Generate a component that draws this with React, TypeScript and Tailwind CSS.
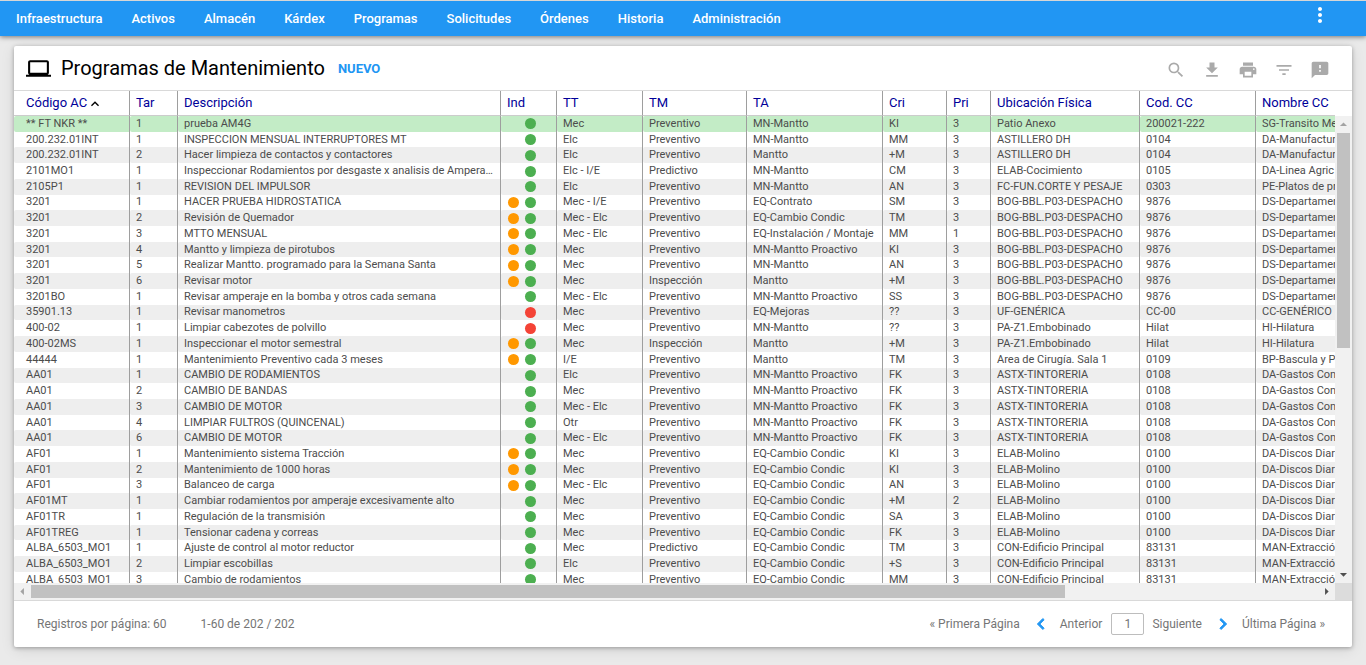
import React from 'react';
import {
    MdArrowDropDown,
    MdChevronLeft,
    MdChevronRight,
    MdFeedback,
    MdFileDownload,
    MdFilterList,
    MdKeyboardArrowUp,
    MdLaptop,
    MdMoreVert,
    MdPrint,
    MdSearch,
} from 'react-icons/md';

const menuItems = [
    'Infraestructura',
    'Activos',
    'Almacén',
    'Kárdex',
    'Programas',
    'Solicitudes',
    'Órdenes',
    'Historia',
    'Administración',
];

const columns = [
    { label: 'Código AC', width: 'w-[116px]' },
    { label: 'Tar', width: 'w-[48px]' },
    { label: 'Descripción', width: 'w-[323px]' },
    { label: 'Ind', width: 'w-[56px]' },
    { label: 'TT', width: 'w-[86px]' },
    { label: 'TM', width: 'w-[104px]' },
    { label: 'TA', width: 'w-[136px]' },
    { label: 'Cri', width: 'w-[64px]' },
    { label: 'Pri', width: 'w-[44px]' },
    { label: 'Ubicación Física', width: 'w-[149px]' },
    { label: 'Cod. CC', width: 'w-[116px]' },
    { label: 'Nombre CC', width: '' },
];

// codigo, tar, descripcion, ind (o = orange, g = green, r = red), tt, tm, ta, cri, pri, ubicacion, cod cc, nombre cc
const rows = [
    ['** FT NKR **', '1', 'prueba AM4G', 'g', 'Mec', 'Preventivo', 'MN-Mantto', 'KI', '3', 'Patio Anexo', '200021-222', 'SG-Transito Me'],
    ['200.232.01INT', '1', 'INSPECCION MENSUAL INTERRUPTORES MT', 'g', 'Elc', 'Preventivo', 'MN-Mantto', 'MM', '3', 'ASTILLERO DH', '0104', 'DA-Manufactur'],
    ['200.232.01INT', '2', 'Hacer limpieza de contactos y contactores', 'g', 'Elc', 'Preventivo', 'Mantto', '+M', '3', 'ASTILLERO DH', '0104', 'DA-Manufactur'],
    ['2101MO1', '1', 'Inspeccionar Rodamientos por desgaste x analisis de Amperaje y ruido', 'g', 'Elc - I/E', 'Predictivo', 'MN-Mantto', 'CM', '3', 'ELAB-Cocimiento', '0105', 'DA-Linea Agric'],
    ['2105P1', '1', 'REVISION DEL IMPULSOR', 'g', 'Elc', 'Preventivo', 'MN-Mantto', 'AN', '3', 'FC-FUN.CORTE Y PESAJE', '0303', 'PE-Platos de pr'],
    ['3201', '1', 'HACER PRUEBA HIDROSTATICA', 'og', 'Mec - I/E', 'Preventivo', 'EQ-Contrato', 'SM', '3', 'BOG-BBL.P03-DESPACHO', '9876', 'DS-Departamen'],
    ['3201', '2', 'Revisión de Quemador', 'og', 'Mec - Elc', 'Preventivo', 'EQ-Cambio Condic', 'TM', '3', 'BOG-BBL.P03-DESPACHO', '9876', 'DS-Departamen'],
    ['3201', '3', 'MTTO MENSUAL', 'og', 'Mec - Elc', 'Preventivo', 'EQ-Instalación / Montaje', 'MM', '1', 'BOG-BBL.P03-DESPACHO', '9876', 'DS-Departamen'],
    ['3201', '4', 'Mantto y limpieza de pirotubos', 'og', 'Mec', 'Preventivo', 'MN-Mantto Proactivo', 'KI', '3', 'BOG-BBL.P03-DESPACHO', '9876', 'DS-Departamen'],
    ['3201', '5', 'Realizar Mantto. programado para la Semana Santa', 'og', 'Mec', 'Preventivo', 'MN-Mantto', 'AN', '3', 'BOG-BBL.P03-DESPACHO', '9876', 'DS-Departamen'],
    ['3201', '6', 'Revisar motor', 'og', 'Mec', 'Inspección', 'Mantto', '+M', '3', 'BOG-BBL.P03-DESPACHO', '9876', 'DS-Departamen'],
    ['3201BO', '1', 'Revisar amperaje en la bomba y otros cada semana', 'g', 'Mec - Elc', 'Preventivo', 'MN-Mantto Proactivo', 'SS', '3', 'BOG-BBL.P03-DESPACHO', '9876', 'DS-Departamen'],
    ['35901.13', '1', 'Revisar manometros', 'r', 'Mec', 'Preventivo', 'EQ-Mejoras', '??', '3', 'UF-GENÉRICA', 'CC-00', 'CC-GENÉRICO'],
    ['400-02', '1', 'Limpiar cabezotes de polvillo', 'r', 'Mec', 'Preventivo', 'MN-Mantto', '??', '3', 'PA-Z1.Embobinado', 'Hilat', 'HI-Hilatura'],
    ['400-02MS', '1', 'Inspeccionar el motor semestral', 'og', 'Mec', 'Inspección', 'Mantto', '+M', '3', 'PA-Z1.Embobinado', 'Hilat', 'HI-Hilatura'],
    ['44444', '1', 'Mantenimiento Preventivo cada 3 meses', 'og', 'I/E', 'Preventivo', 'Mantto', 'TM', '3', 'Area de Cirugía. Sala 1', '0109', 'BP-Bascula y P'],
    ['AA01', '1', 'CAMBIO DE RODAMIENTOS', 'g', 'Elc', 'Preventivo', 'MN-Mantto Proactivo', 'FK', '3', 'ASTX-TINTORERIA', '0108', 'DA-Gastos Con'],
    ['AA01', '2', 'CAMBIO DE BANDAS', 'g', 'Mec', 'Preventivo', 'MN-Mantto Proactivo', 'FK', '3', 'ASTX-TINTORERIA', '0108', 'DA-Gastos Con'],
    ['AA01', '3', 'CAMBIO DE MOTOR', 'g', 'Mec - Elc', 'Preventivo', 'MN-Mantto Proactivo', 'FK', '3', 'ASTX-TINTORERIA', '0108', 'DA-Gastos Con'],
    ['AA01', '4', 'LIMPIAR FULTROS (QUINCENAL)', 'g', 'Otr', 'Preventivo', 'MN-Mantto Proactivo', 'FK', '3', 'ASTX-TINTORERIA', '0108', 'DA-Gastos Con'],
    ['AA01', '6', 'CAMBIO DE MOTOR', 'g', 'Mec - Elc', 'Preventivo', 'MN-Mantto Proactivo', 'FK', '3', 'ASTX-TINTORERIA', '0108', 'DA-Gastos Con'],
    ['AF01', '1', 'Mantenimiento sistema Tracción', 'og', 'Mec', 'Preventivo', 'EQ-Cambio Condic', 'KI', '3', 'ELAB-Molino', '0100', 'DA-Discos Diar'],
    ['AF01', '2', 'Mantenimiento de 1000 horas', 'og', 'Mec', 'Preventivo', 'EQ-Cambio Condic', 'KI', '3', 'ELAB-Molino', '0100', 'DA-Discos Diar'],
    ['AF01', '3', 'Balanceo de carga', 'og', 'Mec - Elc', 'Preventivo', 'EQ-Cambio Condic', 'AN', '3', 'ELAB-Molino', '0100', 'DA-Discos Diar'],
    ['AF01MT', '1', 'Cambiar rodamientos por amperaje excesivamente alto', 'g', 'Mec', 'Preventivo', 'EQ-Cambio Condic', '+M', '2', 'ELAB-Molino', '0100', 'DA-Discos Diar'],
    ['AF01TR', '1', 'Regulación de la transmisión', 'g', 'Mec', 'Preventivo', 'EQ-Cambio Condic', 'SA', '3', 'ELAB-Molino', '0100', 'DA-Discos Diar'],
    ['AF01TREG', '1', 'Tensionar cadena y correas', 'g', 'Mec', 'Preventivo', 'EQ-Cambio Condic', 'FK', '3', 'ELAB-Molino', '0100', 'DA-Discos Diar'],
    ['ALBA_6503_MO1', '1', 'Ajuste de control al motor reductor', 'g', 'Mec', 'Predictivo', 'EQ-Cambio Condic', 'TM', '3', 'CON-Edificio Principal', '83131', 'MAN-Extracció'],
    ['ALBA_6503_MO1', '2', 'Limpiar escobillas', 'g', 'Elc', 'Preventivo', 'EQ-Cambio Condic', '+S', '3', 'CON-Edificio Principal', '83131', 'MAN-Extracció'],
    ['ALBA_6503_MO1', '3', 'Cambio de rodamientos', 'g', 'Mec', 'Preventivo', 'EQ-Cambio Condic', 'MM', '3', 'CON-Edificio Principal', '83131', 'MAN-Extracció'],
];

const Indicators: React.FC<{ value: string }> = ({ value }) => (
    <div className="flex justify-end gap-[6px] pr-[14px]">
        {value.includes('o') && <span className="w-[11px] h-[11px] rounded-full bg-[#ff9800]"></span>}
        {value.includes('g') && <span className="w-[11px] h-[11px] rounded-full bg-[#4caf50]"></span>}
        {value.includes('r') && <span className="w-[11px] h-[11px] rounded-full bg-[#f44336]"></span>}
    </div>
);

const TopMenu: React.FC = () => (
    <header className="relative flex items-center justify-between h-[36px] pl-[16px] pr-[34px] border-t border-[#d6d6d6] bg-[#2196f3] shadow-[0_1px_5px_rgba(0,0,0,0.5)]">
        <nav className="flex items-center gap-[29px] text-[13px] font-medium text-white">
            {menuItems.map((item) => (
                <a key={item} href="#">{item}</a>
            ))}
        </nav>
        <button aria-label="Más opciones" className="text-white mb-[7px]">
            <MdMoreVert size={24} />
        </button>
    </header>
);

const Toolbar: React.FC = () => (
    <div className="flex items-center h-[45px] pl-[12px] pr-[22px] border-b border-[#d9d9d9]">
        <MdLaptop size={25} className="text-black" />
        <h1 className="ml-[10px] text-[20px] text-black">Programas de Mantenimiento</h1>
        <button className="ml-[13px] mt-[2px] text-[13px] font-bold text-[#2196f3]">NUEVO</button>
        <div className="flex items-center gap-[16px] ml-auto mt-[4px] text-[#aaaaaa]">
            <button aria-label="Buscar"><MdSearch size={20} /></button>
            <button aria-label="Descargar"><MdFileDownload size={20} /></button>
            <button aria-label="Imprimir"><MdPrint size={20} /></button>
            <button aria-label="Filtrar"><MdFilterList size={20} /></button>
            <button aria-label="Comentarios"><MdFeedback size={20} /></button>
        </div>
    </div>
);

const ProgramTable: React.FC = () => (
    <div className="flex h-[492px]">
        <div className="flex-1 min-w-0 overflow-hidden">
            <table className="table-fixed border-separate border-spacing-0 w-full min-w-[1321px] h-[497px]">
                <thead>
                    <tr className="h-[25px]">
                        {columns.map((col) => (
                            <th
                                key={col.label}
                                className={`${col.width} p-0 pb-[2px] pl-[6px] first:pl-[12px] border-r last:border-r-0 border-r-[#9e9e9e] border-b border-b-[#cccccc] text-left text-[13px] leading-[21px] font-normal text-[#000099] whitespace-nowrap`}
                            >
                                {col.label === 'Código AC' ? (
                                    <span className="flex items-center">
                                        {col.label}
                                        <MdKeyboardArrowUp size={16} className="mt-[3px] text-black" />
                                    </span>
                                ) : (
                                    col.label
                                )}
                            </th>
                        ))}
                    </tr>
                </thead>
                <tbody>
                    {rows.map((row, i) => (
                        <tr key={i} className={i === 0 ? 'bg-white *:bg-[#c3ecc6]' : 'even:bg-white odd:*:bg-[#eeeeee]'}>
                            {row.map((cell, j) => (
                                <td
                                    key={j}
                                    className="p-0 pl-[6px] first:pl-[12px] pr-[6px] last:pr-0 border-r last:border-r-0 border-[#9e9e9e] rounded-l-xs align-middle text-[11px] leading-[14px] text-[#4c4c4c] whitespace-nowrap overflow-hidden text-ellipsis last:text-clip"
                                >
                                    {j === 3 ? <Indicators value={cell} /> : cell}
                                </td>
                            ))}
                        </tr>
                    ))}
                </tbody>
            </table>
        </div>
        <div className="flex flex-col w-[17px] pt-[25px]">
            <div className="flex-1 flex flex-col items-center bg-[#f1f1f1]">
                <MdArrowDropDown size={17} className="rotate-180 text-[#a3a3a3]" />
                <div className="w-[13px] h-[215px] bg-[#c1c1c1]"></div>
                <MdArrowDropDown size={17} className="mt-auto text-[#505050]" />
            </div>
        </div>
    </div>
);

const HorizontalScroll: React.FC = () => (
    <div className="flex h-[18px] border-b border-[#d9d9d9] bg-[#dcdcdc]">
        <div className="flex-1 flex items-center bg-[#f1f1f1]">
            <MdArrowDropDown size={17} className="rotate-90 text-[#a3a3a3]" />
            <div className="flex-1 flex">
                <div className="grow-[45] h-[13px] bg-[#c1c1c1]"></div>
                <div className="grow-[11]"></div>
            </div>
            <MdArrowDropDown size={17} className="-rotate-90 text-[#505050]" />
        </div>
        <div className="w-[17px]"></div>
    </div>
);

const Pagination: React.FC = () => (
    <footer className="flex items-center justify-between h-[46px] pl-[23px] pr-[27px] text-[12px] text-[#757575]">
        <div className="flex items-center gap-[34px]">
            <span>Registros por página: 60</span>
            <span>1-60 de 202 / 202</span>
        </div>
        <div className="flex items-center">
            <button>« Primera Página</button>
            <button className="flex items-center gap-[8px] ml-[10px]">
                <MdChevronLeft size={22} className="text-[#2196f3] [&>path:last-child]:stroke-1" />
                Anterior
            </button>
            <input
                type="text"
                aria-label="Página"
                defaultValue="1"
                className="w-[33px] h-[22px] ml-[9px] mr-[8px] border border-[#bdbdbd] rounded-xs text-center"
            />
            <button className="flex items-center gap-[10px]">
                Siguiente
                <MdChevronRight size={22} className="text-[#2196f3] [&>path:last-child]:stroke-1" />
            </button>
            <button className="ml-[8px]">Última Página »</button>
        </div>
    </footer>
);

const App: React.FC = () => {
    return (
        <div className="min-h-screen bg-[#eaeaea] font-[Roboto,sans-serif]">
            <TopMenu />
            <main className="px-[14px] pt-[10px] pb-[18px]">
                <section className="bg-white rounded-xs shadow-[0_1px_4px_rgba(0,0,0,0.3),0_3px_14px_rgba(0,0,0,0.1)]">
                    <Toolbar />
                    <ProgramTable />
                    <HorizontalScroll />
                    <Pagination />
                </section>
            </main>
        </div>
    );
};

export default App;
